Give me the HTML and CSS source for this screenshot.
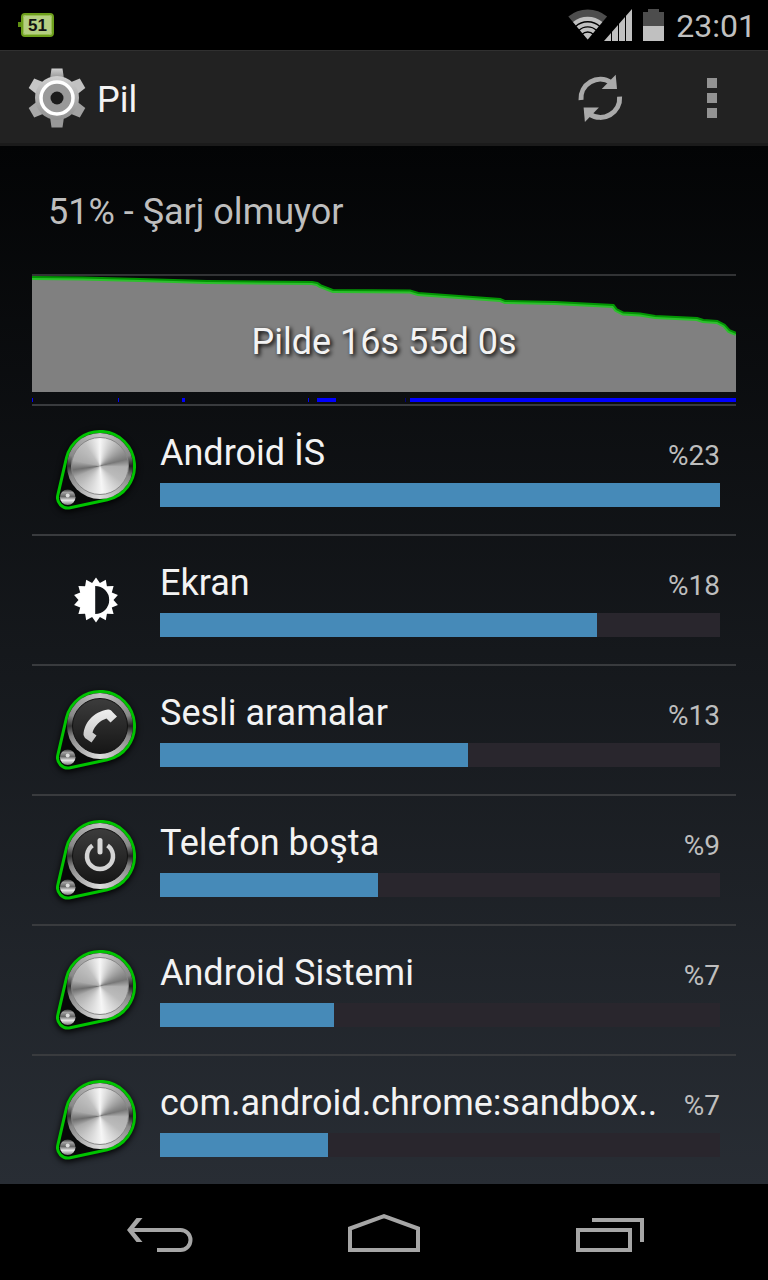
FILE: index.html
```html
<!DOCTYPE html>
<html lang="tr">
<head>
    <meta charset="UTF-8">
    <meta name="viewport" content="width=device-width, initial-scale=1.0">
    <title>Pil</title>
    <link rel="stylesheet" href="styles.css">
</head>
<body>
    <!-- shared drawings -->
    <svg class="defs" width="0" height="0" aria-hidden="true">
        <defs>
            <linearGradient id="gearFill" x1="0" y1="0" x2="0" y2="1">
                <stop offset="0" stop-color="#cfcfcf"/>
                <stop offset="1" stop-color="#8f8f8f"/>
            </linearGradient>
            <linearGradient id="glyphFill" x1="0" y1="0" x2="0" y2="1">
                <stop offset="0" stop-color="#eeeeee"/>
                <stop offset="1" stop-color="#c4c4c4"/>
            </linearGradient>
            <linearGradient id="ballFill" x1="0" y1="0" x2="0" y2="1">
                <stop offset="0" stop-color="#3a3a3a"/>
                <stop offset="0.2" stop-color="#a0a0a0"/>
                <stop offset="0.45" stop-color="#666666"/>
                <stop offset="0.7" stop-color="#e8e8e8"/>
                <stop offset="1" stop-color="#777777"/>
            </linearGradient>
            <symbol id="case" viewBox="0 0 80 82">
                <path d="M10.4 29.2 A34.5 34.5 0 1 1 51.3 70.7 L14.2 78.8 A10.5 10.5 0 0 1 1.8 66.1Z" fill="#080909" stroke="#00c400" stroke-width="3"/>
                <circle cx="11.7" cy="68.2" r="7.8" fill="url(#ballFill)"/>
                <circle cx="11.7" cy="66.5" r="2" fill="#ddd"/>
            </symbol>
        </defs>
    </svg>

    <div class="screen">
        <div class="status-bar">
            <svg class="badge" width="36" height="24" viewBox="0 0 36 24" role="img" aria-label="51">
                <path d="M0 9 H4 V14 H0Z" fill="#5f8f12"/>
                <rect x="4" y="1" width="31" height="22" rx="3" fill="#b5cf82" stroke="#6d9f1c" stroke-width="2"/>
                <rect x="5.5" y="2.5" width="28" height="19" rx="2" fill="none" stroke="#98be52"/>
                <text x="19.5" y="18" class="badge-text">51</text>
            </svg>
            <div class="status-icons">
                <svg width="98" height="34" viewBox="0 0 98 34" aria-hidden="true">
                    <!-- wifi -->
                    <path d="M19.7 31.5 L0.3 8.5 A30 30 0 0 1 39.1 8.5Z" fill="#4d4d4d"/>
                    <path d="M19.7 31.5 L5 14 A23 23 0 0 1 34.4 14Z" fill="#c0c0c0"/>
                    <g fill="none" stroke="#000" stroke-width="1.3">
                        <path d="M7.5 18.5 A18 18 0 0 1 31.9 18.5"/>
                        <path d="M10.7 22.5 A13 13 0 0 1 28.7 22.5"/>
                        <path d="M13.9 26.5 A8 8 0 0 1 25.5 26.5"/>
                    </g>
                    <!-- signal -->
                    <path d="M36 33 L64 1 V33Z" fill="#c0c0c0"/>
                    <path d="M43.5 0 V33 M50.5 0 V33 M57.5 0 V33" stroke="#000"/>
                    <!-- battery -->
                    <path d="M75 4 H80 V1 H91 V4 H96 V18 H75Z" fill="#4d4d4d"/>
                    <path d="M75 18 H96 V33 H75Z" fill="#c0c0c0"/>
                </svg>
                <time class="clock">23:01</time>
            </div>
        </div>

        <header class="action-bar">
            <a href="#" class="app-title">
                <svg width="60" height="60" viewBox="-30 -30 60 60" aria-hidden="true">
                    <g fill="url(#gearFill)">
                        <path d="M-7 -19 L-5.5 -29.5 H5.5 L7 -19Z"/>
                        <path d="M-7 -19 L-5.5 -29.5 H5.5 L7 -19Z" transform="rotate(60)" fill="#c2c2c2"/>
                        <path d="M-7 -19 L-5.5 -29.5 H5.5 L7 -19Z" transform="rotate(120)" fill="#a2a2a2"/>
                        <path d="M-7 -19 L-5.5 -29.5 H5.5 L7 -19Z" transform="rotate(180)" fill="#999"/>
                        <path d="M-7 -19 L-5.5 -29.5 H5.5 L7 -19Z" transform="rotate(240)" fill="#a8a8a8"/>
                        <path d="M-7 -19 L-5.5 -29.5 H5.5 L7 -19Z" transform="rotate(300)" fill="#c6c6c6"/>
                        <circle r="22"/>
                    </g>
                    <circle r="16" fill="#999" stroke="#fff" stroke-width="3.5"/>
                    <circle r="6.5" fill="#1c1c1c"/>
                </svg>
                <h1>Pil</h1>
            </a>
            <button class="action" aria-label="Yenile">
                <svg width="48" height="48" viewBox="0 0 48 48" aria-hidden="true">
                    <g id="arrow">
                        <path d="M5 26 A19.3 19.3 0 0 1 35 8.5" fill="none" stroke="#aaa" stroke-width="5"/>
                        <path d="M39.7 0.7 L41 15 H25.7Z" fill="#aaa"/>
                    </g>
                    <use href="#arrow" transform="rotate(180 24.3 24.3)"/>
                </svg>
            </button>
            <button class="action" aria-label="Menü">
                <svg width="10" height="40" viewBox="0 0 10 40" aria-hidden="true">
                    <path d="M0 0H10V10H0Z M0 15H10V25H0Z M0 30H10V40H0Z" fill="#939393"/>
                </svg>
            </button>
        </header>

        <main class="content">
            <h2 class="summary">51% - Şarj olmuyor</h2>

            <a href="#" class="chart">
                <svg viewBox="0 0 704 128" preserveAspectRatio="none" aria-hidden="true">
                    <path d="M0 2 L50 2.5 L108 4 L175 6 L280 7 L285 8 L288 10 L301 15 L378 15.5 L386 18 L427 21 L468 24 L473 26 L523 27 L581 30 L584 34 L591 37.5 L608 38.5 L623 41 L665 43 L671 45 L685 46 L692 49.5 L697 55 L704 58 V116 H0Z" fill="#808080"/>
                    <path d="M0 2 L50 2.5 L108 4 L175 6 L280 7 L285 8 L288 10 L301 15 L378 15.5 L386 18 L427 21 L468 24 L473 26 L523 27 L581 30 L584 34 L591 37.5 L608 38.5 L623 41 L665 43 L671 45 L685 46 L692 49.5 L697 55 L704 58" fill="none" stroke="#00e000" stroke-opacity="0.65" stroke-width="4"/>
                    <path d="M0 122H1V126H0Z M86 122H87V126H86Z M150 122H153V126H150Z M276 122H277V126H276Z M285 122H304V126H285Z M378 122H704V126H378Z" fill="#00f"/>
                    <path d="M373 122H374V126H373Z" fill="#00007a"/>
                </svg>
                <span class="chart-label">Pilde 16s 55d 0s</span>
            </a>

            <ul class="usage">
                <li>
                    <a href="#" class="usage-row">
                        <span class="knob">
                            <svg width="80" height="82"><use href="#case"/></svg>
                            <span class="dial metal"></span>
                        </span>
                        <span class="info">
                            <span class="name">Android İS</span>
                            <span class="percent">%23</span>
                            <progress value="100" max="100" aria-label="Android İS"></progress>
                        </span>
                    </a>
                </li>
                <li>
                    <a href="#" class="usage-row">
                        <svg class="sun" width="46" height="46" viewBox="-23 -23 46 46" aria-hidden="true">
                            <path fill="#fff" fill-rule="evenodd" d="M0 -22.5 L3.9 -17.1 L9.8 -20.3 L10.9 -13.7 L17.6 -14 L15.8 -7.6 L21.9 -5 L17.5 0 L21.9 5 L15.8 7.6 L17.6 14 L10.9 13.7 L9.8 20.3 L3.9 17.1 L0 22.5 L-3.9 17.1 L-9.8 20.3 L-10.9 13.7 L-17.6 14 L-15.8 7.6 L-21.9 5 L-17.5 0 L-21.9 -5 L-15.8 -7.6 L-17.6 -14 L-10.9 -13.7 L-9.8 -20.3 L-3.9 -17.1Z M-0.8 -14 V14 A14 14 0 0 0 -0.8 -14Z"/>
                        </svg>
                        <span class="info">
                            <span class="name">Ekran</span>
                            <span class="percent">%18</span>
                            <progress value="78" max="100" aria-label="Ekran"></progress>
                        </span>
                    </a>
                </li>
                <li>
                    <a href="#" class="usage-row">
                        <span class="knob">
                            <svg width="80" height="82"><use href="#case"/></svg>
                            <span class="dial">
                                <svg width="40" height="40" viewBox="0 0 40 40" aria-hidden="true">
                                    <path d="M3.5 29 C4 17 13 6 28 3.5 C30 3.3 31.5 4.500 32.5 6 L37 10.5 L30.5 16.5 L26.5 12.5 C20 14.5 14.5 20 12.5 26.5 L16.5 29.5 L11.5 36.5 L5 32Z" fill="url(#glyphFill)"/>
                                </svg>
                            </span>
                        </span>
                        <span class="info">
                            <span class="name">Sesli aramalar</span>
                            <span class="percent">%13</span>
                            <progress value="55" max="100" aria-label="Sesli aramalar"></progress>
                        </span>
                    </a>
                </li>
                <li>
                    <a href="#" class="usage-row">
                        <span class="knob">
                            <svg width="80" height="82"><use href="#case"/></svg>
                            <span class="dial">
                                <svg width="40" height="40" viewBox="0 0 40 40" aria-hidden="true">
                                    <path d="M12.5 9.5 A13 13 0 1 0 27.5 9.5" fill="none" stroke="#d4d4d4" stroke-width="4.5"/>
                                    <path d="M20 4.5 V16" fill="none" stroke="#d8d8d8" stroke-width="5" stroke-linecap="round"/>
                                </svg>
                            </span>
                        </span>
                        <span class="info">
                            <span class="name">Telefon boşta</span>
                            <span class="percent">%9</span>
                            <progress value="39" max="100" aria-label="Telefon boşta"></progress>
                        </span>
                    </a>
                </li>
                <li>
                    <a href="#" class="usage-row">
                        <span class="knob">
                            <svg width="80" height="82"><use href="#case"/></svg>
                            <span class="dial metal"></span>
                        </span>
                        <span class="info">
                            <span class="name">Android Sistemi</span>
                            <span class="percent">%7</span>
                            <progress value="31" max="100" aria-label="Android Sistemi"></progress>
                        </span>
                    </a>
                </li>
                <li>
                    <a href="#" class="usage-row">
                        <span class="knob">
                            <svg width="80" height="82"><use href="#case"/></svg>
                            <span class="dial metal"></span>
                        </span>
                        <span class="info">
                            <span class="name">com.android.chrome:sandbox..</span>
                            <span class="percent">%7</span>
                            <progress value="30" max="100" aria-label="com.android.chrome"></progress>
                        </span>
                    </a>
                </li>
            </ul>
        </main>

        <nav class="nav-bar">
            <button aria-label="Geri">
                <svg width="68" height="40" viewBox="0 0 68 40" fill="#a6a6a6" aria-hidden="true">
                    <path d="M31 38 H54.5 A10 10 0 0 0 54.5 18 H5" fill="none" stroke="#a6a6a6" stroke-width="4"/>
                    <path d="M10.5 6 H16.5 L6.5 18 L16.5 30 H10.5 L1 18Z"/>
                </svg>
            </button>
            <button aria-label="Ana ekran">
                <svg width="72" height="40" viewBox="0 0 72 40" fill="none" stroke="#a6a6a6" stroke-width="4" aria-hidden="true">
                    <path d="M2 16.5 L36 4.2 L70 16.5 V38 H2Z"/>
                </svg>
            </button>
            <button aria-label="Son uygulamalar">
                <svg width="72" height="40" viewBox="0 0 72 40" fill="none" stroke="#a6a6a6" stroke-width="4" aria-hidden="true">
                    <path d="M6 18 H58 V38 H6Z"/>
                    <path d="M20 8 H70 V30"/>
                </svg>
            </button>
        </nav>
    </div>
</body>
</html>
```
FILE: styles.css
```css
* {
    margin: 0;
    padding: 0;
    box-sizing: border-box;
}

body {
    background: #000;
    color: #f3f3f3;
    font-family: Roboto, "Noto Sans", sans-serif;
}

a {
    color: inherit;
    text-decoration: none;
}

button {
    border: none;
    background: none;
    cursor: pointer;
}

svg {
    display: block;
}

.defs {
    position: absolute;
}

.screen {
    min-height: 100vh;
    display: flex;
    flex-direction: column;
}

/* Status bar */
.status-bar {
    height: 50px;
    padding: 0 12px 0 18px;
    display: flex;
    align-items: center;
    justify-content: space-between;
}

.badge-text {
    font: bold 17px "Liberation Sans", sans-serif;
    text-anchor: middle;
    fill: #111;
}

.status-icons {
    display: flex;
    align-items: center;
    gap: 10px;
}

.clock {
    padding-top: 2px;
    font-size: 32px;
    line-height: 48px;
    color: #c0c0c0;
}

/* Action bar */
.action-bar {
    height: 96px;
    padding: 2px 0 0 27px;
    display: flex;
    align-items: center;
    background: #222;
    border-top: 1px solid #303030;
    border-bottom: 3px solid #1b1b1b;
}

.app-title {
    flex: 1;
    display: flex;
    align-items: center;
    gap: 10px;
}

.app-title h1 {
    padding-top: 4px;
    font-size: 36px;
    font-weight: 400;
}

.action {
    width: 112px;
    height: 90px;
    display: grid;
    place-items: center;
}

/* Content */
.content {
    flex: 1;
    padding: 0 32px;
    background: linear-gradient(#030405, #282d34);
}

.summary {
    padding: 4px 16px 0;
    font-size: 36px;
    font-weight: 400;
    line-height: 124px;
    color: #bebebe;
}

.chart {
    display: block;
    position: relative;
    border-top: 2px solid #323335;
}

.chart svg {
    width: 100%;
    height: 128px;
}

.chart-label {
    position: absolute;
    inset: 0;
    padding-top: 2px;
    text-align: center;
    font-size: 36px;
    line-height: 128px;
    text-shadow: 2px 2px 4px #000;
}

.usage {
    list-style: none;
}

.usage li {
    border-top: 2px solid #393b3e;
}

.usage-row {
    height: 128px;
    padding-right: 16px;
    display: grid;
    grid-template-columns: 128px 1fr;
    align-items: center;
}

.info {
    padding-bottom: 2px;
    display: grid;
    grid-template-columns: 1fr auto;
    align-items: baseline;
    row-gap: 6px;
}

.name {
    font-size: 36px;
    line-height: 42px;
    white-space: nowrap;
}

.percent {
    font-size: 28px;
    line-height: 42px;
    color: #bebebe;
}

progress {
    grid-column: 1 / -1;
    width: 100%;
    height: 24px;
    appearance: none;
    border: none;
    background: #29262d;
}

progress::-webkit-progress-bar {
    background: #29262d;
}

progress::-webkit-progress-value {
    background: #468ab8;
}

progress::-moz-progress-bar {
    background: #468ab8;
}

/* Icons */
.sun,
.knob {
    justify-self: center;
}

.knob {
    display: grid;
    filter: drop-shadow(0 2px 3px #000);
}

.knob > * {
    grid-area: 1 / 1;
}

.dial {
    width: 66px;
    height: 66px;
    margin: 4px 0 0 11px;
    border-radius: 50%;
    display: grid;
    place-items: center;
    background: conic-gradient(#c4c4c4, #888 70deg, #222 90deg, #888 110deg, #ddd 180deg, #888 250deg, #333 270deg, #888 290deg, #c4c4c4);
}

.dial > *,
.dial::before {
    grid-area: 1 / 1;
}

.dial::before {
    content: '';
    width: 54px;
    height: 54px;
    border-radius: 50%;
    border: 1px solid #111;
    background: linear-gradient(#3c3c3c, #161616);
}

.dial > svg {
    z-index: 1;
}

.metal::before {
    width: 56px;
    height: 56px;
    border-color: #888;
    background: conic-gradient(#f6f6f6, #c4c4c4 30deg, #777 76deg, #b0b0b0 92deg, #bbb 125deg, #f6f6f6 175deg, #ccc 215deg, #aaa 245deg, #707070 262deg, #aaa 282deg, #c0c0c0 325deg, #f6f6f6);
}

/* Navigation bar */
.nav-bar {
    height: 96px;
    padding: 0 48px;
    display: flex;
}

.nav-bar button {
    flex: 1;
    display: grid;
    place-items: center;
}
```
